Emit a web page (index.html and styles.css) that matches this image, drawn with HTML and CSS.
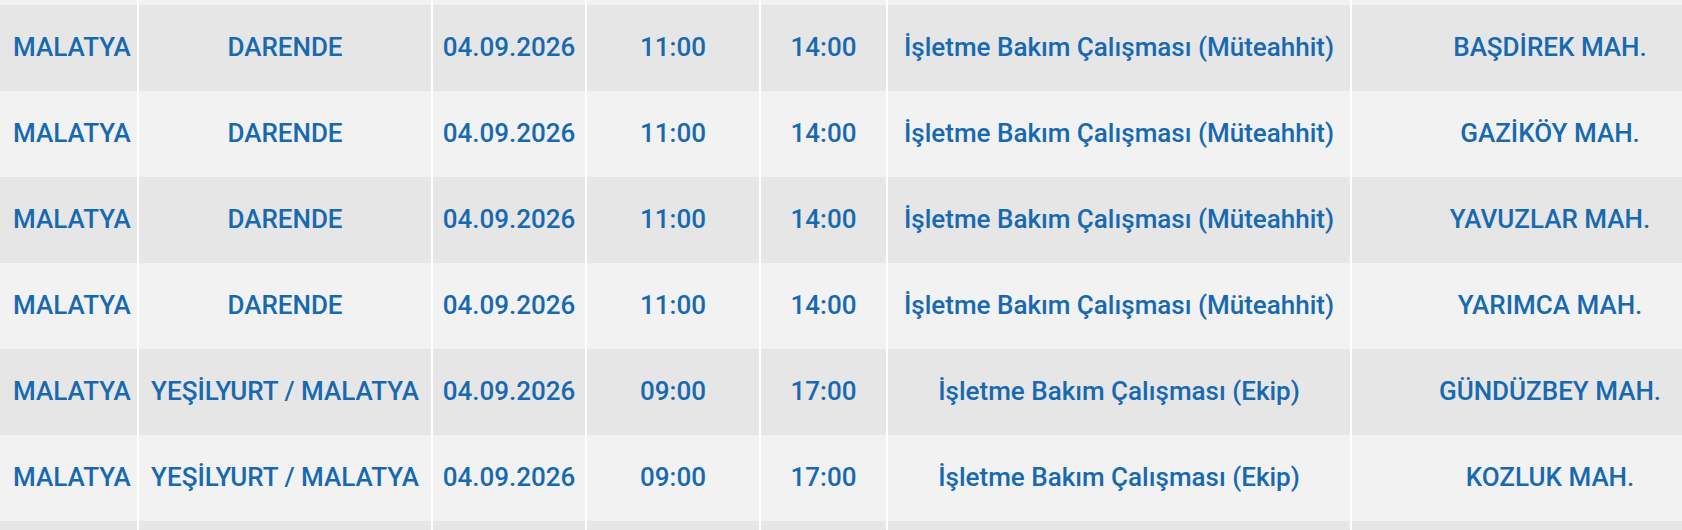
FILE: index.html
```html
<!DOCTYPE html>
<html lang="tr">
<head>
<meta charset="utf-8">
<title>Kesinti Listesi</title>
<link rel="stylesheet" href="styles.css">
</head>
<body>
<div class="wrap">
<table class="outages">
<colgroup>
<col class="c-il"><col class="c-ilce"><col class="c-tarih"><col class="c-bas"><col class="c-bit"><col class="c-neden"><col class="c-mah">
</colgroup>
<tbody>
<tr class="cut"><td class="first"></td><td></td><td></td><td></td><td></td><td></td><td></td></tr>
<tr><td class="first">MALATYA</td><td>DARENDE</td><td>04.09.2026</td><td>11:00</td><td>14:00</td><td>İşletme Bakım Çalışması (Müteahhit)</td><td>BAŞDİREK MAH.</td></tr>
<tr><td class="first">MALATYA</td><td>DARENDE</td><td>04.09.2026</td><td>11:00</td><td>14:00</td><td>İşletme Bakım Çalışması (Müteahhit)</td><td>GAZİKÖY MAH.</td></tr>
<tr><td class="first">MALATYA</td><td>DARENDE</td><td>04.09.2026</td><td>11:00</td><td>14:00</td><td>İşletme Bakım Çalışması (Müteahhit)</td><td>YAVUZLAR MAH.</td></tr>
<tr><td class="first">MALATYA</td><td>DARENDE</td><td>04.09.2026</td><td>11:00</td><td>14:00</td><td>İşletme Bakım Çalışması (Müteahhit)</td><td>YARIMCA MAH.</td></tr>
<tr><td class="first">MALATYA</td><td>YEŞİLYURT / MALATYA</td><td>04.09.2026</td><td>09:00</td><td>17:00</td><td>İşletme Bakım Çalışması (Ekip)</td><td>GÜNDÜZBEY MAH.</td></tr>
<tr><td class="first">MALATYA</td><td>YEŞİLYURT / MALATYA</td><td>04.09.2026</td><td>09:00</td><td>17:00</td><td>İşletme Bakım Çalışması (Ekip)</td><td>KOZLUK MAH.</td></tr>
<tr class="tail"><td class="first"></td><td></td><td></td><td></td><td></td><td></td><td></td></tr>
</tbody>
</table>
</div>
</body>
</html>
```
FILE: styles.css
```css
html, body {
  margin: 0;
  padding: 0;
  background: #ffffff;
  overflow: hidden;
}
.wrap {
  width: 1750px;
}
.outages {
  width: 1750px;
  table-layout: fixed;
  border-collapse: separate;
  border-spacing: 0;
  font-family: Roboto, "Liberation Sans", Arial, sans-serif;
  font-weight: 500;
  font-size: 26px;
  color: #1769b0;
}
.c-il { width: 139px; }
.c-ilce { width: 294px; }
.c-tarih { width: 154px; }
.c-bas { width: 174px; }
.c-bit { width: 127px; }
.c-neden { width: 464px; }
.c-mah { width: 398px; }
.outages td {
  height: 86px;
  padding: 0 8px;
  box-sizing: border-box;
  text-align: center;
  vertical-align: middle;
  white-space: nowrap;
  border-right: 2px solid #ffffff;
  line-height: 1.2;
}
.outages td.first {
  text-align: left;
  padding-left: 13px;
  padding-right: 0;
}
.outages tr:nth-child(odd) td { background: #f2f2f2; }
.outages tr:nth-child(even) td { background: #e6e6e6; }
.outages tr.cut td { height: 5px; padding: 0; }
.outages tr.tail td { height: 86px; }
```
